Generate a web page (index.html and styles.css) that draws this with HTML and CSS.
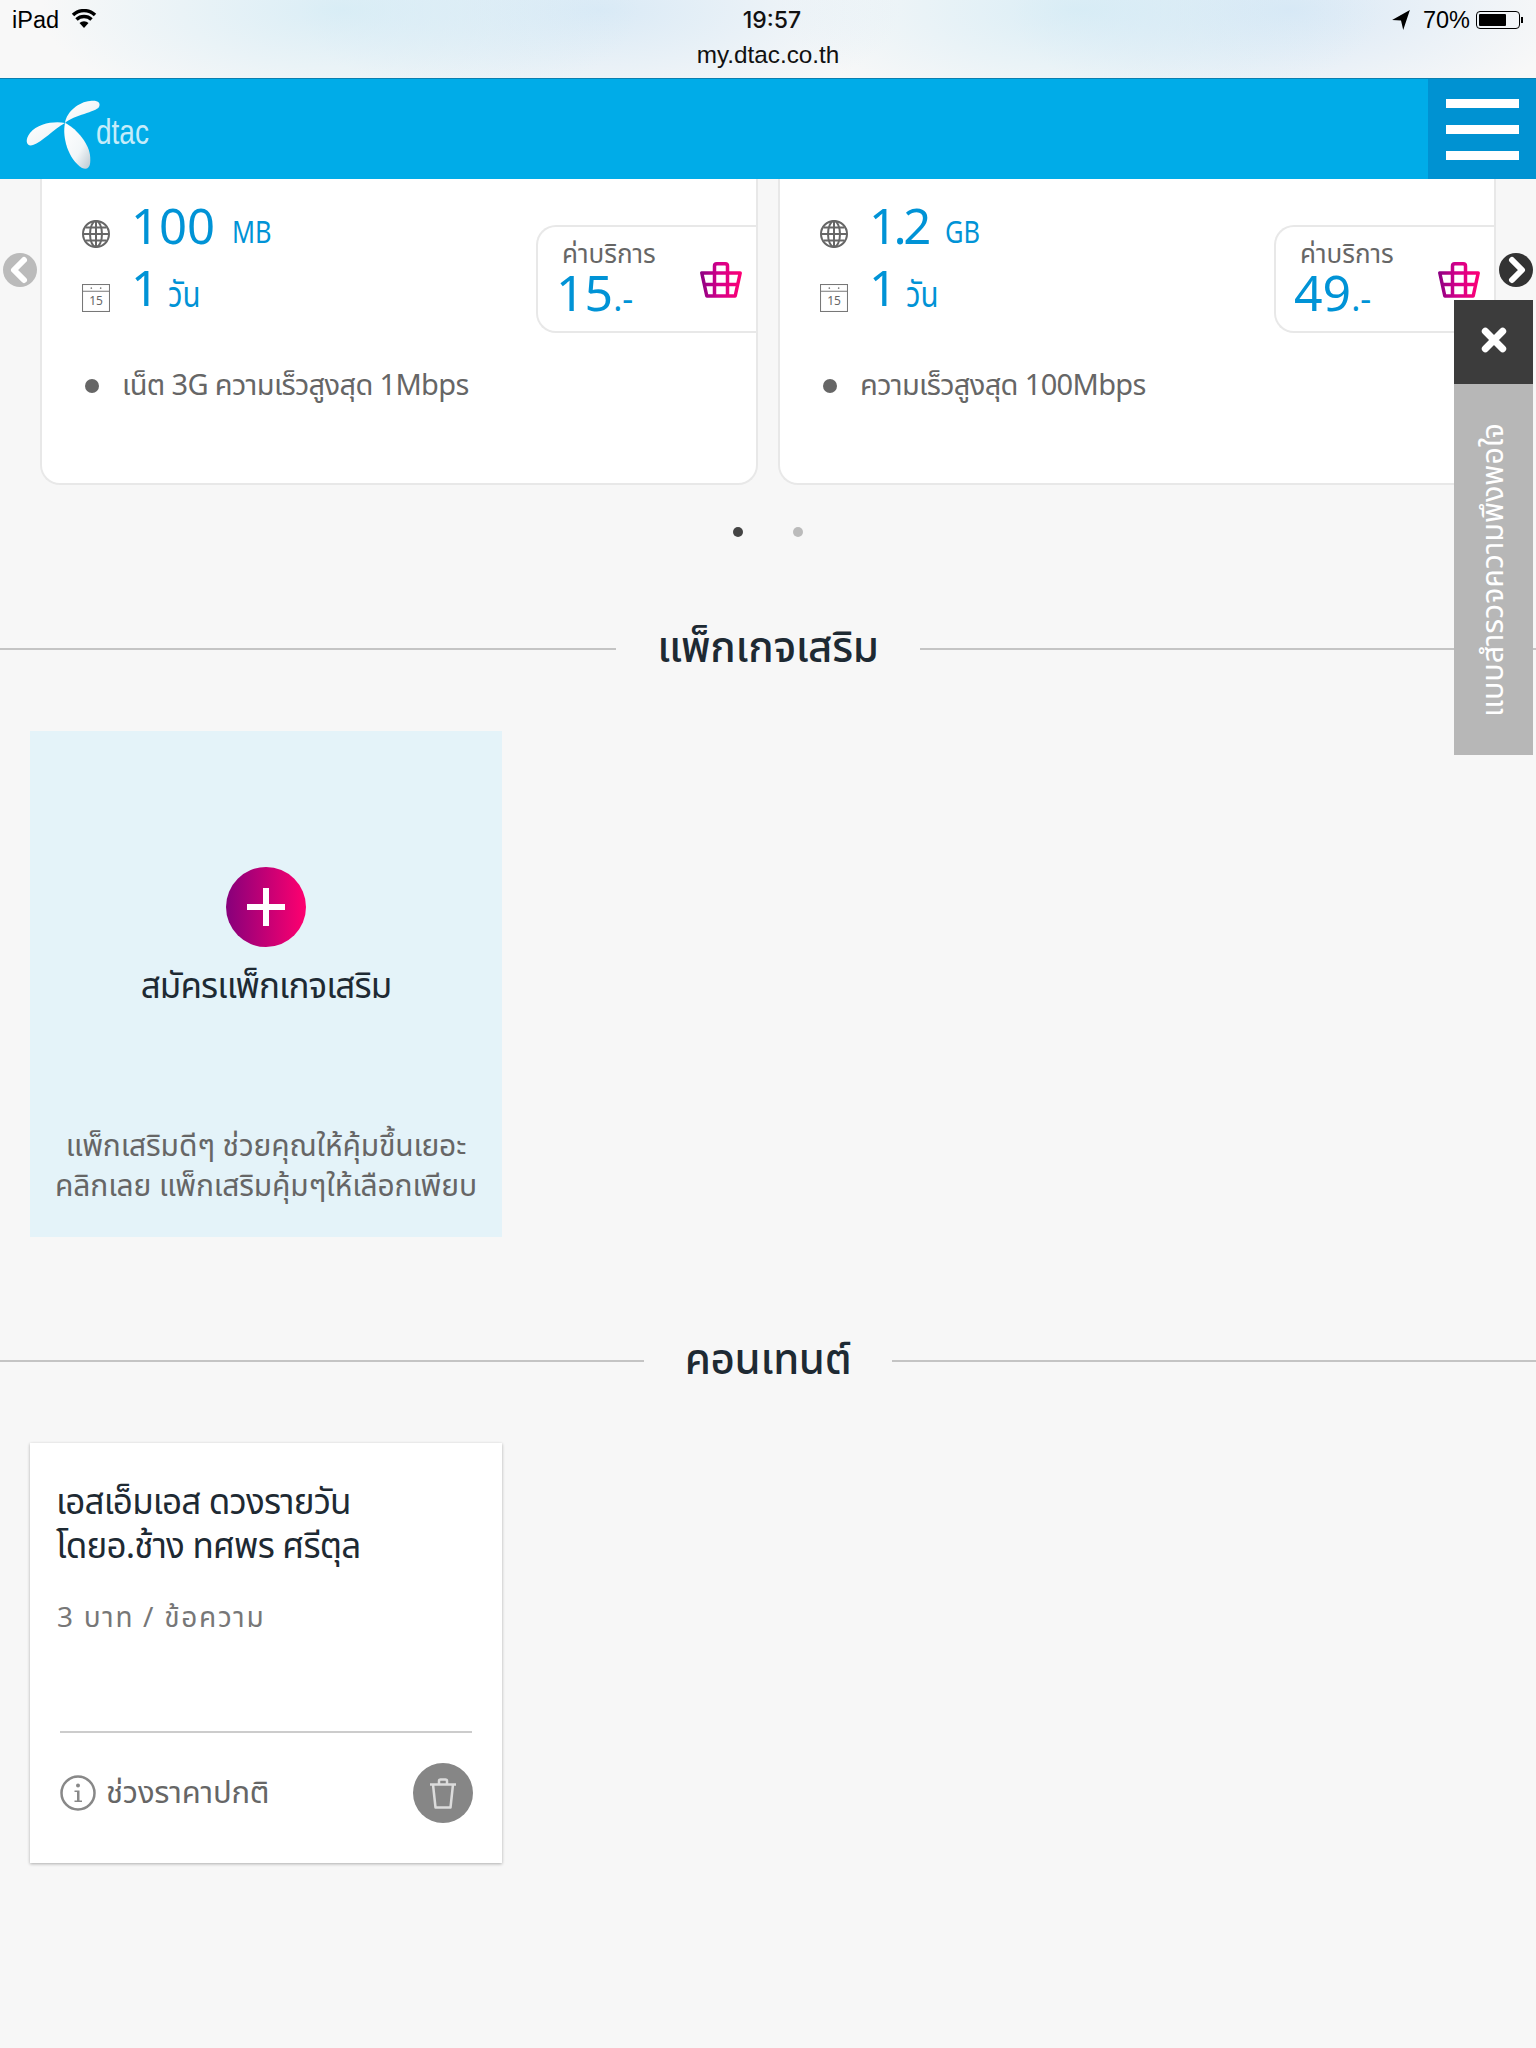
FILE: index.html
```html
<!DOCTYPE html>
<html lang="th">
<head>
    <meta charset="UTF-8">
    <meta name="viewport" content="width=device-width, initial-scale=1.0">
    <title>my.dtac.co.th</title>
    <link rel="stylesheet" href="styles.css">
</head>
<body>
    <svg class="sprite" xmlns="http://www.w3.org/2000/svg">
        <defs>
            <linearGradient id="pinkStroke" gradientUnits="userSpaceOnUse" x1="0" y1="0" x2="42" y2="0">
                <stop offset="0" stop-color="#8a0082"/>
                <stop offset="0.45" stop-color="#d4008a"/>
                <stop offset="1" stop-color="#ff0074"/>
            </linearGradient>
            <linearGradient id="petal" x1="0" y1="0" x2="1" y2="1">
                <stop offset="0" stop-color="#ffffff"/>
                <stop offset="0.6" stop-color="#f2f6f8"/>
                <stop offset="1" stop-color="#bcc9d2"/>
            </linearGradient>
        </defs>
        <symbol id="globe" viewBox="0 0 28 28">
            <g fill="none" stroke="#666" stroke-width="2">
                <circle cx="14" cy="14" r="13"/>
                <ellipse cx="14" cy="14" rx="6" ry="13"/>
                <path d="M14 1v26M1.500 14h25M3.500 7.500h21M3.500 20.500h21"/>
            </g>
        </symbol>
        <symbol id="calendar" viewBox="0 0 27 27">
            <g fill="none" stroke="#777" stroke-width="1">
                <rect x="0.500" y="0.500" width="26" height="26"/>
                <path d="M0.500 7h26"/>
            </g>
            <circle cx="9" cy="4" r="0.800" fill="#777"/>
            <circle cx="18" cy="4" r="0.800" fill="#777"/>
        </symbol>
        <symbol id="basket" viewBox="0 0 42 36">
            <g fill="none" stroke="url(#pinkStroke)" stroke-width="3.500" stroke-linejoin="round">
                <path d="M14.500 11V4q0-2.200 2.200-2.200h8.600q2.200 0 2.200 2.200v7"/>
                <path d="M1.800 11h38.400l-5 23H6.800z"/>
                <path d="M4 22.500h34M14.500 11v23M27.500 11v23"/>
            </g>
        </symbol>
    </svg>

    <div class="ios-bar">
        <div class="ios-status">
            <div class="ios-left">
                <span>iPad</span>
                <svg class="wifi" viewBox="0 0 26 20">
                    <path d="M13 19L8.500 14a6.500 6.500 0 0 1 9 0z" fill="#000"/>
                    <path d="M5.500 10.500a11 11 0 0 1 15 0M2 6a16 16 0 0 1 22 0" fill="none" stroke="#000" stroke-width="3.500"/>
                </svg>
            </div>
            <div class="ios-time">19:57</div>
            <div class="ios-right">
                <svg class="locate" viewBox="0 0 16 18">
                    <path d="M16 0L0 9l8 .5L10 18z" fill="#000"/>
                </svg>
                <span>70%</span>
                <div class="battery"><div class="battery-level"></div></div>
                <div class="battery-nub"></div>
            </div>
        </div>
        <div class="ios-url">my.dtac.co.th</div>
    </div>

    <header class="topbar">
        <div class="logo">
            <svg class="logo-mark" viewBox="0 0 80 72">
                <path d="M41 24C43 12 55 3 66 2 74 1 77 4 75 8 72 13 50 16 41 24z" fill="url(#petal)"/>
                <path d="M41 24C31 22 14 24 6 34 0 42 3 48 9 46 18 43 30 30 41 24z" fill="url(#petal)"/>
                <path d="M41 24C38 38 44 60 58 69 66 72 67 65 66 56 64 42 50 28 41 24z" fill="url(#petal)"/>
            </svg>
            <span class="logo-text">dtac</span>
        </div>
        <div class="menu-btn">
            <div class="menu-line"></div>
            <div class="menu-line"></div>
            <div class="menu-line"></div>
        </div>
    </header>

    <section class="carousel">
        <div class="card-row">
            <div class="plan">
                <div class="plan-top">
                    <div class="plan-specs">
                        <div class="spec">
                            <svg class="spec-icon globe"><use href="#globe"/></svg>
                            <span class="spec-num">100</span>
                            <span class="spec-unit">MB</span>
                        </div>
                        <div class="spec">
                            <div class="cal">
                                <svg class="spec-icon"><use href="#calendar"/></svg>
                                <span class="cal-day">15</span>
                            </div>
                            <span class="spec-num tight">1</span>
                            <span class="spec-unit thai">วัน</span>
                        </div>
                    </div>
                    <div class="price">
                        <div>
                            <div class="price-label">ค่าบริการ</div>
                            <div class="price-num">15<span class="price-tail">.-</span></div>
                        </div>
                        <svg class="basket"><use href="#basket"/></svg>
                    </div>
                </div>
                <div class="plan-note"><span class="bullet"></span>เน็ต 3G ความเร็วสูงสุด 1Mbps</div>
            </div>
            <div class="plan">
                <div class="plan-top">
                    <div class="plan-specs">
                        <div class="spec">
                            <svg class="spec-icon globe"><use href="#globe"/></svg>
                            <span class="spec-num tight">1.2</span>
                            <span class="spec-unit">GB</span>
                        </div>
                        <div class="spec">
                            <div class="cal">
                                <svg class="spec-icon"><use href="#calendar"/></svg>
                                <span class="cal-day">15</span>
                            </div>
                            <span class="spec-num tight">1</span>
                            <span class="spec-unit thai">วัน</span>
                        </div>
                    </div>
                    <div class="price">
                        <div>
                            <div class="price-label">ค่าบริการ</div>
                            <div class="price-num">49<span class="price-tail">.-</span></div>
                        </div>
                        <svg class="basket"><use href="#basket"/></svg>
                    </div>
                </div>
                <div class="plan-note"><span class="bullet"></span>ความเร็วสูงสุด 100Mbps</div>
            </div>
        </div>
        <div class="dots">
            <span class="dot active"></span>
            <span class="dot"></span>
        </div>
        <div class="arrow arrow-left">
            <svg viewBox="0 0 34 34"><path d="M21 7L11 17l10 10" fill="none" stroke="#fff" stroke-width="6" stroke-linecap="round" stroke-linejoin="round"/></svg>
        </div>
        <div class="arrow arrow-right">
            <svg viewBox="0 0 34 34"><path d="M13 7l10 10-10 10" fill="none" stroke="#fff" stroke-width="6" stroke-linecap="round" stroke-linejoin="round"/></svg>
        </div>
    </section>

    <h2 class="section-title first">แพ็กเกจเสริม</h2>
    <div class="tile-wrap">
        <div class="addon-tile">
            <div class="plus-circle"><div class="plus"></div></div>
            <div class="addon-label">สมัครแพ็กเกจเสริม</div>
            <div class="addon-desc">แพ็กเสริมดีๆ ช่วยคุณให้คุ้มขึ้นเยอะ<br>คลิกเลย แพ็กเสริมคุ้มๆให้เลือกเพียบ</div>
        </div>
    </div>

    <h2 class="section-title second">คอนเทนต์</h2>
    <div class="tile-wrap">
        <div class="content-card">
            <div class="content-title">เอสเอ็มเอส ดวงรายวัน<br>โดยอ.ช้าง ทศพร ศรีตุล</div>
            <div class="content-price">3 บาท / ข้อความ</div>
            <div class="content-foot">
                <svg class="info" viewBox="0 0 36 36">
                    <circle cx="18" cy="18" r="16.500" fill="none" stroke="#888" stroke-width="2.500"/>
                    <circle cx="18" cy="10.500" r="2" fill="#888"/>
                    <path d="M14.500 15.500H19.500V25.500H22V27H14.500V25.500H17V17H14.500z" fill="#888"/>
                </svg>
                <span class="foot-text">ช่วงราคาปกติ</span>
                <div class="trash">
                    <svg viewBox="0 0 28 31">
                        <g fill="none" stroke="#dcdcdc" stroke-width="2.500" stroke-linejoin="round">
                            <path d="M1 6.500h26M10 6.500V3q0-1.500 1.500-1.500h5Q18 1.500 18 3v3.500M4 6.500l2.500 23h15l2.500-23"/>
                        </g>
                    </svg>
                </div>
            </div>
        </div>
    </div>

    <aside class="survey">
        <div class="survey-close">
            <svg viewBox="0 0 24 24"><path d="M4 4l16 16M20 4L4 20" fill="none" stroke="#fff" stroke-width="6.500" stroke-linecap="round"/></svg>
        </div>
        <div class="survey-tab"><span class="survey-text">แบบสำรวจความพึงพอใจ</span></div>
    </aside>
</body>
</html>
```

FILE: styles.css
```css
body {
    margin: 0;
    background-color: #f7f7f7;
    font-family: "Noto Sans Thai", "Noto Sans", "DejaVu Sans", sans-serif;
    position: relative;
    min-height: 2048px;
    overflow: hidden;
}

.sprite {
    display: block;
    width: 0;
    height: 0;
}

/* ios status + url */
.ios-bar {
    height: 78px;
    background:
        radial-gradient(ellipse 300px 110px at 340px 10px, rgba(205, 233, 245, 0.7), transparent),
        radial-gradient(ellipse 300px 110px at 600px 10px, rgba(205, 228, 245, 0.7), transparent),
        radial-gradient(ellipse 300px 110px at 1080px 10px, rgba(205, 233, 245, 0.7), transparent),
        radial-gradient(ellipse 280px 110px at 1290px 10px, rgba(205, 226, 245, 0.7), transparent),
        #f8f8f8;
    border-bottom: 1px solid #0a7fb0;
    font-family: "Liberation Sans", Arial, sans-serif;
    color: #000;
}

.ios-status {
    display: flex;
    justify-content: space-between;
    align-items: center;
    height: 40px;
    padding: 0 13px 0 12px;
    position: relative;
    font-size: 23.500px;
}

.ios-left, .ios-right {
    display: flex;
    align-items: center;
}

.wifi {
    width: 26px;
    height: 20px;
    margin-left: 12px;
    margin-bottom: 2px;
}

.ios-time {
    position: absolute;
    left: 0;
    right: 0;
    text-align: center;
    padding-left: 8px;
    font-family: Inter, "Liberation Sans", sans-serif;
    font-size: 23px;
    font-weight: 500;
    color: #111;
}

.locate {
    width: 18px;
    height: 20px;
    margin-right: 13px;
}

.battery {
    width: 44px;
    height: 18px;
    border: 1px solid #000;
    border-radius: 4px;
    margin-left: 6px;
    padding: 2px;
    box-sizing: border-box;
}

.battery-level {
    width: 70%;
    height: 100%;
    background-color: #000;
    border-radius: 1px;
}

.battery-nub {
    width: 2px;
    height: 6px;
    background-color: #000;
    margin-left: 1px;
}

.ios-url {
    text-align: center;
    font-size: 24.300px;
    line-height: 30px;
    color: #111;
}

/* blue header */
.topbar {
    height: 100px;
    background-color: #00ace8;
    display: flex;
    justify-content: space-between;
    position: relative;
    z-index: 2;
}

.logo {
    display: flex;
    align-items: center;
    padding-left: 24px;
}

.logo-mark {
    width: 80px;
    height: 72px;
    margin-top: 11px;
}

.logo-text {
    color: #c6ecfa;
    font-family: "Liberation Sans", Arial, sans-serif;
    font-size: 35px;
    margin-left: -8px;
    margin-top: 5px;
    transform: scaleX(0.8);
    transform-origin: left center;
}

.menu-btn {
    width: 108px;
    background-color: #0092d2;
    display: flex;
    flex-direction: column;
    justify-content: center;
    gap: 17px;
    padding-left: 18px;
    box-sizing: border-box;
}

.menu-line {
    width: 73px;
    height: 9px;
    background-color: #fff;
}

/* plan carousel */
.carousel {
    position: relative;
    height: 375px;
}

.card-row {
    display: flex;
    gap: 20px;
    padding-left: 40px;
}

.plan {
    width: 718px;
    height: 306px;
    box-sizing: border-box;
    background-color: #fff;
    border: 2px solid #e8e8e8;
    border-top: 0;
    border-radius: 0 0 20px 20px;
    overflow: hidden;
    flex-shrink: 0;
}

.plan-top {
    display: flex;
    justify-content: space-between;
    padding-top: 25px;
}

.plan-specs {
    padding-left: 40px;
}

.spec {
    display: flex;
    align-items: flex-end;
    height: 50px;
    margin-bottom: 12px;
}

.spec-icon {
    display: block;
    width: 28px;
    height: 28px;
    margin-bottom: 4px;
}

.spec-icon.globe {
    margin-bottom: 6px;
}

.spec-num {
    color: #0093d6;
    font-size: 49px;
    line-height: 50px;
    margin-left: 21px;
    font-variant-numeric: proportional-nums;
}

.spec-num.tight {
    letter-spacing: -3.500px;
}

.spec-unit {
    color: #0093d6;
    font-size: 31px;
    line-height: 44px;
    margin-left: 17px;
    margin-bottom: -2px;
    transform: scaleX(0.82);
    transform-origin: left bottom;
}

.spec-unit.thai {
    font-size: 36px;
    line-height: 48px;
    margin-left: 12px;
    margin-bottom: -4px;
}

.cal {
    position: relative;
}

.cal-day {
    position: absolute;
    left: 0;
    right: 0;
    top: 9px;
    text-align: center;
    font-size: 12px;
    line-height: 16px;
    color: #666;
}

.price {
    width: 220px;
    height: 108px;
    box-sizing: border-box;
    margin-top: 21px;
    border: 2px solid #e8e8e8;
    border-right: 0;
    border-radius: 20px 0 0 20px;
    display: flex;
    justify-content: space-between;
    align-items: center;
    padding: 7px 14px 0 18px;
}

.price-label {
    color: #666;
    font-size: 26px;
    line-height: 32px;
    padding-left: 6px;
}

.price-num {
    color: #0093d6;
    font-size: 50px;
    line-height: 50px;
}

.price-tail {
    font-size: 34px;
}

.basket {
    width: 42px;
    height: 36px;
    margin-top: -6px;
}

.plan-note {
    display: flex;
    align-items: center;
    gap: 23px;
    margin-top: 33px;
    padding-left: 43px;
    color: #666;
    font-size: 29px;
    line-height: 40px;
    letter-spacing: -0.650px;
}

.bullet {
    width: 14px;
    height: 14px;
    border-radius: 50%;
    background-color: #666;
}

.dots {
    display: flex;
    justify-content: center;
    gap: 50px;
    margin-top: 42px;
}

.dot {
    width: 10px;
    height: 10px;
    border-radius: 50%;
    background-color: #bbb;
}

.dot.active {
    background-color: #444;
}

.arrow {
    position: absolute;
    top: 74px;
    width: 34px;
    height: 34px;
    border-radius: 50%;
}

.arrow svg {
    display: block;
}

.arrow-left {
    left: 3px;
    background-color: #bbb;
}

.arrow-right {
    right: 3px;
    background-color: #333;
}

/* section headings */
.section-title {
    display: flex;
    align-items: center;
    gap: 41px;
    margin: 0;
    font-size: 42px;
    font-weight: 500;
    line-height: 60px;
    letter-spacing: -0.300px;
    color: #1e2a33;
}

.section-title::before, .section-title::after {
    content: "";
    flex: 1;
    height: 2px;
    background-color: #c4c4c4;
}

.section-title.first {
    margin-top: 65px;
}

.section-title.second {
    margin-top: 94px;
}

.tile-wrap {
    padding-left: 30px;
}

.addon-tile {
    width: 472px;
    height: 506px;
    margin-top: 52px;
    background-color: #e4f3f9;
    text-align: center;
    padding-top: 136px;
    box-sizing: border-box;
}

.plus-circle {
    width: 80px;
    height: 80px;
    margin: 0 auto;
    border-radius: 50%;
    background: linear-gradient(90deg, #87007b, #ff006f);
    display: flex;
    align-items: center;
    justify-content: center;
}

.plus {
    width: 38px;
    height: 38px;
    background:
        linear-gradient(#fff, #fff) center / 38px 6px no-repeat,
        linear-gradient(#fff, #fff) center / 6px 38px no-repeat;
    border-radius: 3px;
}

.addon-label {
    margin-top: 16px;
    font-size: 35px;
    line-height: 50px;
    letter-spacing: -0.900px;
    color: #1e2a33;
}

.addon-desc {
    margin-top: 114px;
    font-size: 30px;
    line-height: 40px;
    letter-spacing: -0.150px;
    color: #666;
}

.content-card {
    width: 472px;
    height: 420px;
    margin-top: 52px;
    box-sizing: border-box;
    padding: 39px 30px 0 26px;
    background-color: #fff;
    box-shadow: 0 1px 3px rgba(0, 0, 0, 0.3);
}

.content-title {
    font-size: 35px;
    line-height: 44px;
    letter-spacing: -0.800px;
    color: #1e2a33;
}

.content-price {
    margin-top: 29px;
    margin-left: 1px;
    font-size: 28px;
    line-height: 40px;
    letter-spacing: 1.700px;
    color: #777;
}

.content-foot {
    display: flex;
    align-items: center;
    margin-top: 92px;
    margin-left: 4px;
    padding-top: 30px;
    border-top: 2px solid #ccc;
}

.info {
    width: 36px;
    height: 36px;
}

.foot-text {
    flex: 1;
    margin-left: 10px;
    font-size: 31px;
    letter-spacing: -0.200px;
    color: #666;
}

.trash {
    width: 60px;
    height: 60px;
    border-radius: 50%;
    background-color: #868686;
    display: flex;
    align-items: center;
    justify-content: center;
    margin-right: -1px;
}

.trash svg {
    width: 28px;
    height: 31px;
}

/* feedback tab, sits over the page */
.survey {
    position: absolute;
    top: 300px;
    right: 3px;
    width: 79px;
    z-index: 3;
}

.survey-close {
    height: 84px;
    background-color: #3c3c3c;
    display: flex;
    align-items: center;
    justify-content: center;
    padding-bottom: 4px;
    box-sizing: border-box;
}

.survey-close svg {
    width: 26px;
    height: 26px;
}

.survey-tab {
    height: 371px;
    background-color: #b7b7b7;
    display: flex;
    align-items: center;
    justify-content: center;
}

.survey-text {
    writing-mode: vertical-rl;
    transform: rotate(180deg);
    color: #fff;
    font-size: 30.400px;
    white-space: nowrap;
}
```
